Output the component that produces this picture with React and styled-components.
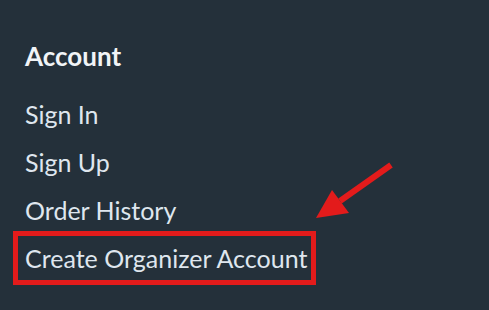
import React from "react";
import styled, { createGlobalStyle } from "styled-components";

const GlobalStyle = createGlobalStyle`
  html, body {
    margin: 0;
    padding: 0;
    background: #24303a;
  }
  body {
    font-family: "Lato", "Noto Sans", sans-serif;
  }
`;

const Page = styled.div`
  position: relative;
  width: 489px;
  height: 310px;
  background: #24303a;
  overflow: hidden;
`;

const Section = styled.section`
  padding: 39px 0 0 25px;
`;

const Heading = styled.h3`
  margin: 0 0 17px;
  font-size: 26px;
  line-height: 34px;
  font-weight: 700;
  color: #f1f4f7;
`;

const List = styled.ul`
  list-style: none;
  margin: 0;
  padding: 0;
`;

const Item = styled.li`
  height: 48px;
  display: flex;
  align-items: center;
`;

const Link = styled.a`
  font-size: 25px;
  line-height: 30px;
  color: #dfe6ee;
  text-decoration: none;
  white-space: nowrap;
  ${(p) =>
    p.$marked &&
    `
    border: 5px solid #e31b1b;
    padding: 7px 4px 7px 7px;
    margin-left: -12px;
  `}
`;

const Arrow = styled.svg`
  position: absolute;
  left: 300px;
  top: 150px;
`;

const links = ["Sign In", "Sign Up", "Order History", "Create Organizer Account"];

export default function App() {
  return (
    <Page>
      <GlobalStyle />
      <Section>
        <Heading>Account</Heading>
        <List>
          {links.map((l, i) => (
            <Item key={l}>
              <Link href="#" $marked={i === links.length - 1}>
                {l}
              </Link>
            </Item>
          ))}
        </List>
      </Section>
      <Arrow width="110" height="80" viewBox="0 0 110 80">
        <line x1="91" y1="15" x2="40" y2="51" stroke="#e31b1b" strokeWidth="6" />
        <polygon points="16,68 32,40 49,63" fill="#e31b1b" />
      </Arrow>
    </Page>
  );
}
